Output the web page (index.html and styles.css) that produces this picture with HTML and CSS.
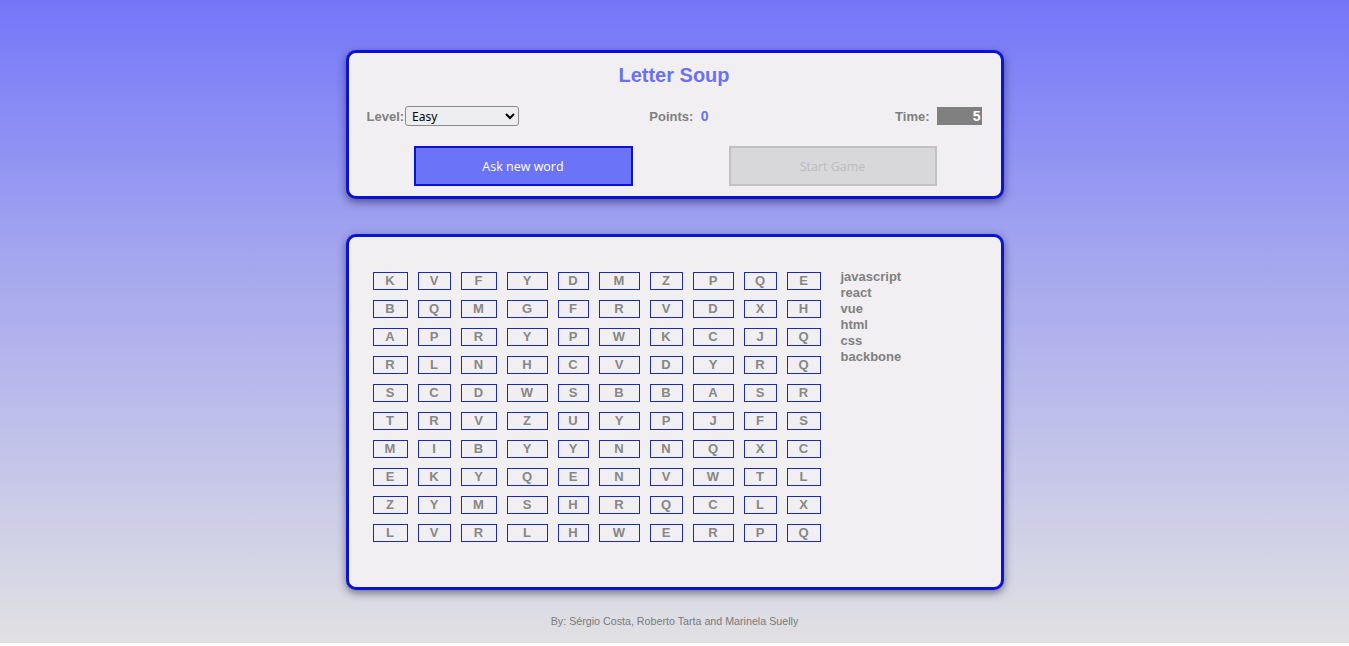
FILE: index.html
```html
<!DOCTYPE html>
<html lang="en">
<head>
<meta charset="utf-8">
<title>Letter Soup</title>
<link rel="stylesheet" href="styles.css">
</head>
<body>
<div class="page">
  <section class="card panel">
    <h1 class="title">Letter Soup</h1>
    <div class="info">
      <div class="info-level">
        <label class="label" for="lvl">Level:</label>
        <select id="lvl" class="select"><option>Easy</option><option>Medium</option><option>Hard</option></select>
      </div>
      <div class="info-points"><span class="label">Points:</span> <span class="points">0</span></div>
      <div class="info-time"><span class="label">Time:</span><span class="timer">5</span></div>
    </div>
    <div class="actions">
      <button class="btn btn-primary">Ask new word</button>
      <button class="btn btn-disabled" disabled>Start Game</button>
    </div>
  </section>

  <section class="card board">
    <div class="grid">
      <span class="cell">K</span><span class="cell">V</span><span class="cell">F</span><span class="cell">Y</span><span class="cell">D</span><span class="cell">M</span><span class="cell">Z</span><span class="cell">P</span><span class="cell">Q</span><span class="cell">E</span>
      <span class="cell">B</span><span class="cell">Q</span><span class="cell">M</span><span class="cell">G</span><span class="cell">F</span><span class="cell">R</span><span class="cell">V</span><span class="cell">D</span><span class="cell">X</span><span class="cell">H</span>
      <span class="cell">A</span><span class="cell">P</span><span class="cell">R</span><span class="cell">Y</span><span class="cell">P</span><span class="cell">W</span><span class="cell">K</span><span class="cell">C</span><span class="cell">J</span><span class="cell">Q</span>
      <span class="cell">R</span><span class="cell">L</span><span class="cell">N</span><span class="cell">H</span><span class="cell">C</span><span class="cell">V</span><span class="cell">D</span><span class="cell">Y</span><span class="cell">R</span><span class="cell">Q</span>
      <span class="cell">S</span><span class="cell">C</span><span class="cell">D</span><span class="cell">W</span><span class="cell">S</span><span class="cell">B</span><span class="cell">B</span><span class="cell">A</span><span class="cell">S</span><span class="cell">R</span>
      <span class="cell">T</span><span class="cell">R</span><span class="cell">V</span><span class="cell">Z</span><span class="cell">U</span><span class="cell">Y</span><span class="cell">P</span><span class="cell">J</span><span class="cell">F</span><span class="cell">S</span>
      <span class="cell">M</span><span class="cell">I</span><span class="cell">B</span><span class="cell">Y</span><span class="cell">Y</span><span class="cell">N</span><span class="cell">N</span><span class="cell">Q</span><span class="cell">X</span><span class="cell">C</span>
      <span class="cell">E</span><span class="cell">K</span><span class="cell">Y</span><span class="cell">Q</span><span class="cell">E</span><span class="cell">N</span><span class="cell">V</span><span class="cell">W</span><span class="cell">T</span><span class="cell">L</span>
      <span class="cell">Z</span><span class="cell">Y</span><span class="cell">M</span><span class="cell">S</span><span class="cell">H</span><span class="cell">R</span><span class="cell">Q</span><span class="cell">C</span><span class="cell">L</span><span class="cell">X</span>
      <span class="cell">L</span><span class="cell">V</span><span class="cell">R</span><span class="cell">L</span><span class="cell">H</span><span class="cell">W</span><span class="cell">E</span><span class="cell">R</span><span class="cell">P</span><span class="cell">Q</span>
    </div>
    <ul class="words">
      <li>javascript</li>
      <li>react</li>
      <li>vue</li>
      <li>html</li>
      <li>css</li>
      <li>backbone</li>
    </ul>
  </section>

  <footer class="footer">By: Sérgio Costa, Roberto Tarta and Marinela Suelly</footer>
</div>
</body>
</html>
```

FILE: styles.css
```css
html {
  background: #ffffff;
}
body {
  margin: 0;
  font-family: "Liberation Sans", Arial, sans-serif;
}
.page {
  height: 643px;
  background: linear-gradient(180deg, #7476f9 0%, #a4a6ef 40%, #e1e1e3 100%);
  display: flex;
  flex-direction: column;
  align-items: center;
  padding-top: 50px;
  box-sizing: border-box;
}
.card {
  width: 658px;
  box-sizing: border-box;
  background: #f1eff1;
  border: 3px solid #0a12d6;
  border-radius: 10px;
  box-shadow: 0 3px 9px rgba(20, 20, 60, 0.55);
}
.panel {
  height: 149px;
  padding: 10px 19px 0 18px;
}
.title {
  margin: 0;
  text-align: center;
  font-size: 20px;
  font-weight: bold;
  color: #6b72ef;
  line-height: 24px;
}
.info {
  display: grid;
  grid-template-columns: 1fr 1fr 1fr;
  align-items: center;
  margin-top: 19px;
  height: 20px;
}
.label {
  font-size: 13px;
  font-weight: bold;
  color: #808080;
}
.info-level {
  display: flex;
  align-items: center;
}
.select {
  width: 114px;
  height: 20px;
  margin-left: 1px;
  font-family: "Noto Sans", "Open Sans", sans-serif;
  font-size: 12px;
  color: #000;
  background: #eeedf0;
  border: 1px solid #8a8a8a;
  border-radius: 3px;
  padding: 0 2px;
}
.info-points {
  text-align: center;
  padding-left: 10px;
}
.points {
  font-size: 14px;
  font-weight: bold;
  color: #6b72ef;
  margin-left: 3px;
}
.info-time {
  display: flex;
  justify-content: flex-end;
  align-items: center;
}
.timer {
  width: 45px;
  height: 18px;
  margin-left: 7px;
  background: #808080;
  color: #fff;
  font-weight: bold;
  font-size: 14px;
  line-height: 18px;
  text-align: right;
  padding-right: 1px;
  box-sizing: border-box;
}
.actions {
  display: flex;
  margin-top: 20px;
  padding-left: 47px;
  gap: 96px;
}
.btn {
  height: 40px;
  font-family: "Open Sans", "Noto Sans", sans-serif;
  font-size: 12.5px;
  box-sizing: border-box;
  padding-top: 1px;
}
.btn-primary {
  width: 219px;
  background: #6b74f7;
  border: 2px solid #0a12d6;
  color: #fff;
}
.btn-disabled {
  width: 208px;
  background: #d8d7d9;
  border: 2px solid #c2c2c2;
  color: #bdbdbd;
}
.board {
  margin-top: 35px;
  height: 356px;
  display: flex;
  align-items: flex-start;
  padding: 35px 0 0 24px;
}
.grid {
  display: grid;
  grid-template-columns: 35px 33px 36px 41px 31px 41px 33px 41px 33px 34px;
  grid-auto-rows: 18px;
  column-gap: 10px;
  row-gap: 10px;
}
.cell {
  border: 1px solid #1c2ab0;
  box-sizing: border-box;
  font-size: 13px;
  font-weight: bold;
  color: #878787;
  text-align: center;
  line-height: 16px;
}
.words {
  list-style: none;
  margin: -3px 0 0 20px;
  padding: 0;
  font-size: 13px;
  font-weight: bold;
  color: #808080;
  line-height: 16px;
}
.footer {
  margin-top: 25px;
  font-size: 10.7px;
  color: #7a7a7a;
  text-align: center;
}
```
